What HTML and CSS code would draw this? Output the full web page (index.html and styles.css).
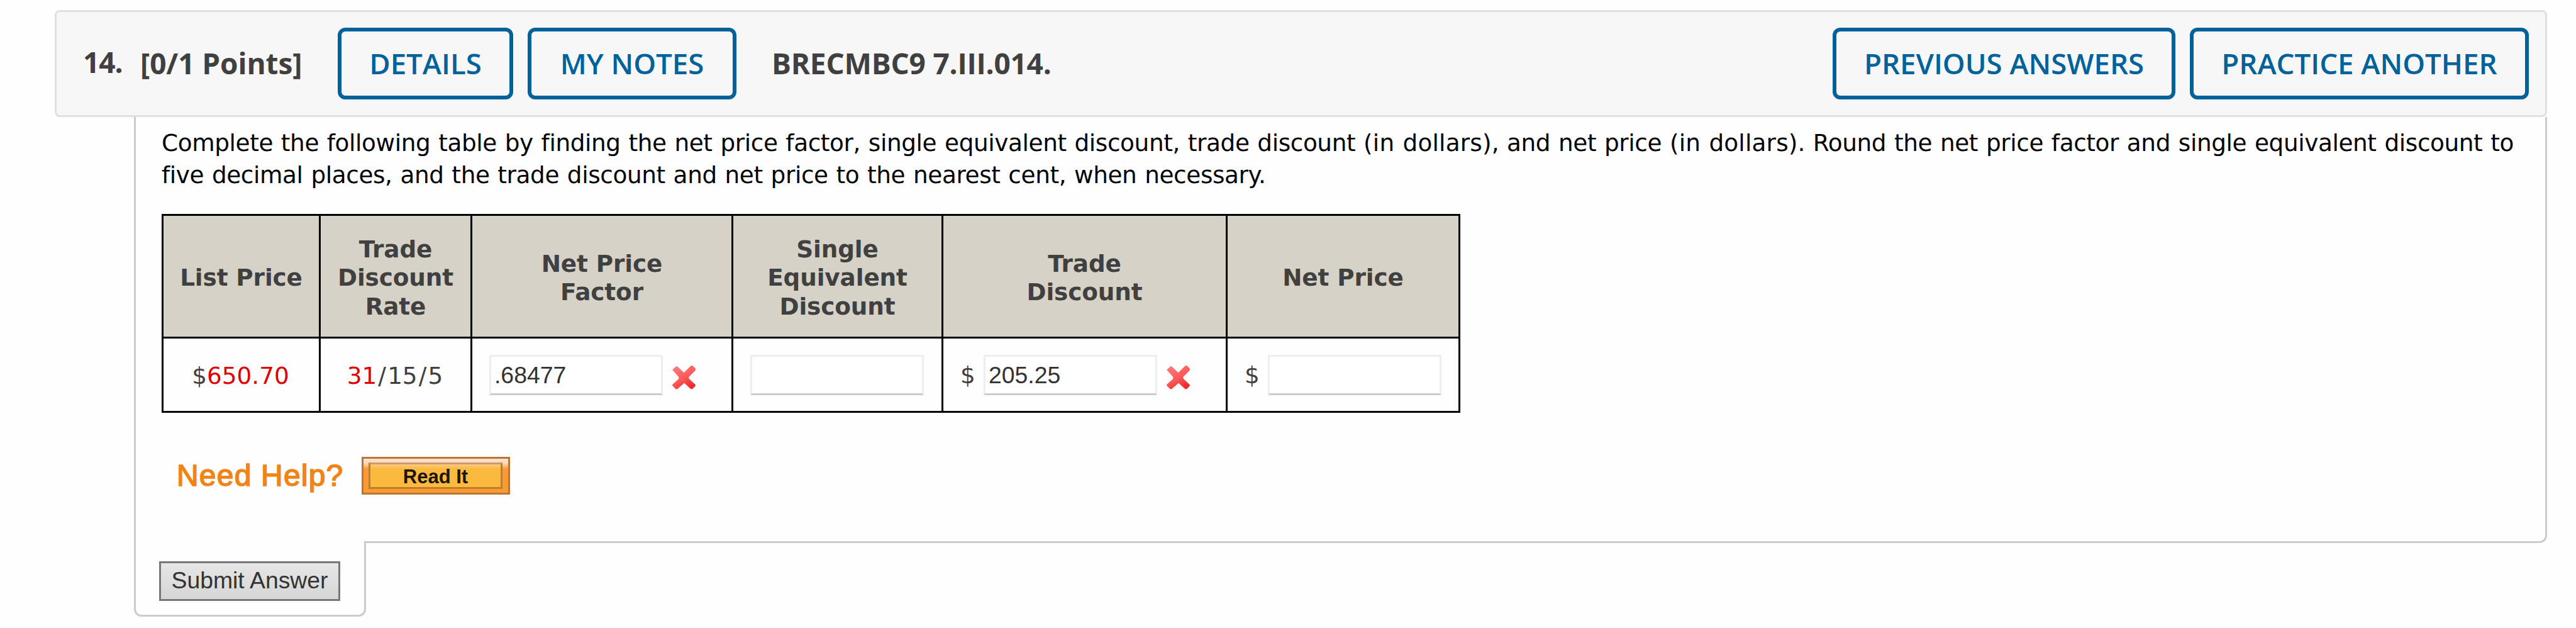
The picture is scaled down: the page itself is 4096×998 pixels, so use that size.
FILE: index.html
```
<!DOCTYPE html>
<html lang="en">
<head>
    <meta charset="UTF-8">
    <meta name="viewport" content="width=device-width, initial-scale=1.0">
    <title>Question 14</title>
    <link rel="stylesheet" href="styles.css">
</head>
<body>
    <div class="question">
        <div class="question-header">
            <span class="number">14.</span>
            <span class="points">[0/1 Points]</span>
            <a class="btn btn-details">DETAILS</a>
            <a class="btn btn-notes">MY NOTES</a>
            <span class="code">BRECMBC9 7.III.014.</span>
            <a class="btn btn-previous">PREVIOUS ANSWERS</a>
            <a class="btn btn-practice">PRACTICE ANOTHER</a>
        </div>
        <div class="question-body">
            <p class="prompt">Complete the following table by finding the net price factor, single equivalent discount, trade discount <span class="aside">(in dollars)</span>, and net price <span class="aside">(in dollars)</span>. Round the net price factor and single equivalent discount to<br>five decimal places, and the trade discount and net price to the nearest cent, when necessary.</p>
            <table class="price-table">
                <colgroup>
                    <col class="col-list">
                    <col class="col-rate">
                    <col class="col-factor">
                    <col class="col-single">
                    <col class="col-discount">
                    <col class="col-net">
                </colgroup>
                <tr>
                    <th>List Price</th>
                    <th>Trade<br>Discount<br>Rate</th>
                    <th>Net Price<br>Factor</th>
                    <th>Single<br>Equivalent<br>Discount</th>
                    <th>Trade<br>Discount</th>
                    <th>Net Price</th>
                </tr>
                <tr>
                    <td class="given">$<span class="red">650.70</span></td>
                    <td class="given"><span class="red">31</span><span class="slash">/</span>15<span class="slash">/</span>5</td>
                    <td>
                        <div class="answer">
                            <input type="text" value=".68477">
                            <svg class="wrong" viewBox="0 0 40 40"><use href="#cross"/></svg>
                        </div>
                    </td>
                    <td>
                        <div class="answer"><input type="text"></div>
                    </td>
                    <td>
                        <div class="answer">
                            <span class="unit">$</span>
                            <input type="text" value="205.25">
                            <svg class="wrong" viewBox="0 0 40 40"><use href="#cross"/></svg>
                        </div>
                    </td>
                    <td>
                        <div class="answer">
                            <span class="unit">$</span>
                            <input type="text">
                        </div>
                    </td>
                </tr>
            </table>
            <div class="help">
                <span class="help-label">Need Help?</span>
                <a class="read-it"><span class="read-it-face">Read It</span></a>
            </div>
        </div>
        <div class="submit-tab">
            <button class="submit-btn">Submit Answer</button>
        </div>
    </div>

    <!-- Shared cross icon -->
    <svg class="defs" width="0" height="0">
        <defs>
            <linearGradient id="cross-fill" x1="0" y1="0" x2="0.6" y2="1">
                <stop offset="0" stop-color="#ff8080"/>
                <stop offset="0.6" stop-color="#fc5a5c"/>
                <stop offset="1" stop-color="#ee2c2c"/>
            </linearGradient>
            <path id="cross" fill="url(#cross-fill)" d="M2 9 Q1 8 2 7 L7 2.500 Q8.500 1.500 10 3 L20 12.500 L30.500 2 Q33 0 35.500 2.500 L38.500 5.500 Q40 7.500 38 9.500 L28.500 19 Q27 21 28.500 22.500 L38.500 32 Q39.500 33 38.500 34.500 L34 39 Q32.500 40 31 39 L20.500 29.500 L9.500 39 Q8 40 6.500 39 L1.500 34 Q0.500 33 1.500 31.500 L11 23 Q12.500 21 11 19 Z"/>
        </defs>
    </svg>
</body>
</html>
```
FILE: styles.css
```
* {
  box-sizing: border-box;
}

body {
  margin: 0;
  background: #fefefe;
  color: #404040;
  font-family: Verdana, "DejaVu Sans", sans-serif;
  font-size: 37.33px;
}

.question {
  width: 3963px;
  padding-top: 16px;
  margin-left: 87px;
}

.question-header {
  display: flex;
  align-items: center;
  height: 170px;
  padding: 0 26px 0 42px;
  background: #f7f7f7;
  border: 3px solid #e0e0e0;
  border-radius: 8px;
  font-family: "Open Sans", sans-serif;
  font-size: 46px;
  font-weight: 700;
  white-space: nowrap;
}

.number {
  width: 91px;
  margin-bottom: 7px;
  letter-spacing: -1px;
}

.points {
  width: 314px;
  padding-bottom: 2px;
  letter-spacing: -0.1px;
}

.code {
  padding-bottom: 2px;
  letter-spacing: -0.2px;
}

.btn {
  display: flex;
  align-items: center;
  justify-content: center;
  height: 114px;
  padding-bottom: 2px;
  border: 6px solid #00629b;
  border-radius: 12px;
  color: #00629b;
  font-size: 45.6px;
  font-weight: 600;
}

.btn-details {
  width: 279px;
  margin-right: 23px;
}

.btn-notes {
  width: 332px;
  margin-right: 56px;
}

.btn-previous {
  width: 545px;
  margin-left: auto;
  margin-right: 23px;
}

.btn-practice {
  width: 539px;
}

.question-body {
  height: 677px;
  margin-left: 126px;
  padding: 16px 0 0 41px;
  border: 3px solid #ccc;
  border-top: none;
  border-radius: 0 0 12px 0;
}

.prompt {
  margin: 0 0 36px;
  color: #000;
  line-height: 51.2px;
  letter-spacing: -0.36px;
  word-spacing: 1.3px;
  white-space: nowrap;
}

.aside {
  letter-spacing: 0.2px;
}

.price-table {
  width: 2065px;
  table-layout: fixed;
  border-collapse: collapse;
}

.col-list { width: 250px; }
.col-rate { width: 241px; }
.col-factor { width: 415px; }
.col-single { width: 334px; }
.col-discount { width: 452px; }
.col-net { width: 370px; }

.price-table th,
.price-table td {
  border: 3px solid #000;
  padding: 0 27px;
}

.price-table th {
  height: 195px;
  padding: 5px 0 0;
  background: #d6d2c7;
  line-height: 45.4px;
  letter-spacing: -0.1px;
}

.price-table td {
  height: 118px;
}

.price-table .given {
  padding: 3px 2px 0 0;
  text-align: center;
}

.red {
  color: #e00000;
}

.slash {
  margin: 0 2.2px;
}

.answer {
  display: flex;
  align-items: center;
}

.answer input {
  width: 276px;
  height: 64px;
  padding: 2px 0 0 5px;
  border: 3px solid #eee;
  border-bottom-color: #ccc;
  background: #fff;
  color: #333;
  font-family: Arial, "Liberation Sans", sans-serif;
  font-size: 37.33px;
}

.unit {
  width: 37px;
}

.wrong {
  width: 39px;
  height: 39px;
  margin: 8px 0 0 14px;
}

.help {
  display: flex;
  align-items: center;
  margin-top: 70px;
  padding-left: 24px;
}

.help-label {
  width: 294px;
  padding-bottom: 2px;
  color: #f08416;
  font-family: Arial, "Liberation Sans", sans-serif;
  font-size: 48px;
  letter-spacing: 1.2px;
  -webkit-text-stroke: 1.6px #f08416;
}

.read-it {
  width: 236px;
  height: 60px;
  padding: 6px 9px 6px 8px;
  border: 3px solid #b87535;
  background: linear-gradient(#fee4cc, #fcd4b0 15%, #f99a33 30%, #f99a33);
}

.read-it-face {
  display: flex;
  align-items: center;
  justify-content: center;
  height: 100%;
  padding-top: 4px;
  border: 3px solid #bd7f2c;
  border-top-color: #c49c74;
  background: linear-gradient(#fccb80, #fbb940 20%);
  color: #1c1608;
  font-family: Arial, "Liberation Sans", sans-serif;
  font-size: 31px;
  font-weight: 700;
}

.submit-tab {
  width: 369px;
  height: 120px;
  margin: -3px 0 0 126px;
  padding: 32px 0 0 37px;
  background: #fefefe;
  border: 3px solid #ccc;
  border-top: none;
  border-radius: 0 0 12px 12px;
}

.submit-btn {
  width: 288px;
  height: 63px;
  padding: 0 0 3px;
  border: 3px solid #767876;
  border-radius: 0;
  background: linear-gradient(#e6e6e6, #d6d6d6);
  color: #333;
  font-family: Arial, "Liberation Sans", sans-serif;
  font-size: 37.33px;
}

.defs {
  position: absolute;
}
```
